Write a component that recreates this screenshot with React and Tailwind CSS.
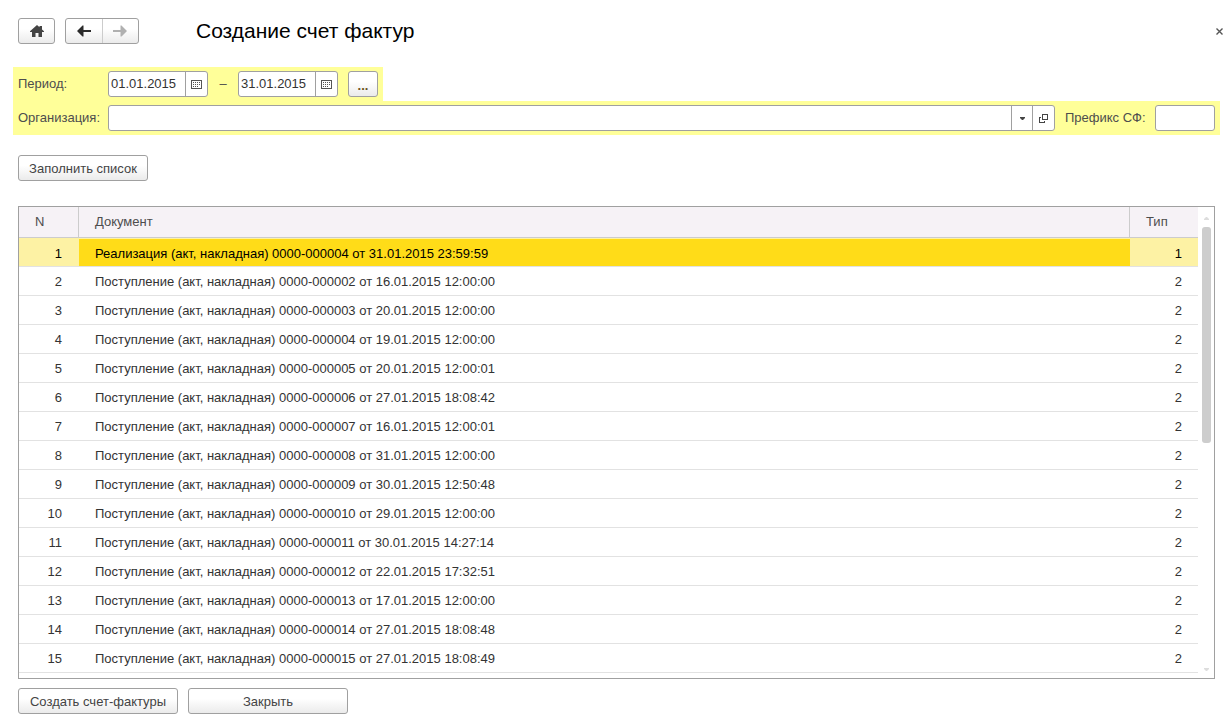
import { useState } from 'react';

const DOCUMENTS = [
  { title: 'Реализация (акт, накладная) 0000-000004 от 31.01.2015 23:59:59', type: 1 },
  { title: 'Поступление (акт, накладная) 0000-000002 от 16.01.2015 12:00:00', type: 2 },
  { title: 'Поступление (акт, накладная) 0000-000003 от 20.01.2015 12:00:00', type: 2 },
  { title: 'Поступление (акт, накладная) 0000-000004 от 19.01.2015 12:00:00', type: 2 },
  { title: 'Поступление (акт, накладная) 0000-000005 от 20.01.2015 12:00:01', type: 2 },
  { title: 'Поступление (акт, накладная) 0000-000006 от 27.01.2015 18:08:42', type: 2 },
  { title: 'Поступление (акт, накладная) 0000-000007 от 16.01.2015 12:00:01', type: 2 },
  { title: 'Поступление (акт, накладная) 0000-000008 от 31.01.2015 12:00:00', type: 2 },
  { title: 'Поступление (акт, накладная) 0000-000009 от 30.01.2015 12:50:48', type: 2 },
  { title: 'Поступление (акт, накладная) 0000-000010 от 29.01.2015 12:00:00', type: 2 },
  { title: 'Поступление (акт, накладная) 0000-000011 от 30.01.2015 14:27:14', type: 2 },
  { title: 'Поступление (акт, накладная) 0000-000012 от 22.01.2015 17:32:51', type: 2 },
  { title: 'Поступление (акт, накладная) 0000-000013 от 17.01.2015 12:00:00', type: 2 },
  { title: 'Поступление (акт, накладная) 0000-000014 от 27.01.2015 18:08:48', type: 2 },
  { title: 'Поступление (акт, накладная) 0000-000015 от 27.01.2015 18:08:49', type: 2 },
];

function HomeIcon() {
  return (
    <svg aria-hidden="true" viewBox="0 0 14 12" fill="currentColor" className="h-3 w-3.5">
      <path d="M7 0 L9.5 2.3 V1 H12 V4.5 L14 6.3 V7 H12 V12 H8.5 V8 H5.5 V12 H2 V7 H0 V6.3 Z" />
    </svg>
  );
}

function ArrowIcon({ className = '' }) {
  return (
    <svg aria-hidden="true" viewBox="0 0 14 12" fill="currentColor" className={`h-3 w-3.5 ${className}`}>
      <path d="M0 6 L5.5 0.5 H6.5 V5 H14 V7 H6.5 V11.5 H5.5 Z" />
    </svg>
  );
}

function CalendarIcon() {
  return (
    <svg aria-hidden="true" viewBox="0 0 11 9" className="h-[9px] w-[11px]" shapeRendering="crispEdges">
      <path d="M0 0H11V9H0Z M1 1V8H10V1Z" fill="#555555" fillRule="evenodd" />
      <path d="M2 2.5H9 M2 4.5H9 M2 6.5H7" stroke="#555555" strokeDasharray="1 1" />
    </svg>
  );
}

function OpenIcon() {
  return (
    <svg
      aria-hidden="true"
      viewBox="0 0 9 9"
      fill="none"
      stroke="#444444"
      className="h-[9px] w-[9px]"
      shapeRendering="crispEdges"
    >
      <path d="M3.5 0.5H8.5V5.5H3.5Z M2 3.5H0.5V8.5H5.5V7" />
    </svg>
  );
}

function TriangleIcon({ className = '' }) {
  return (
    <svg aria-hidden="true" viewBox="0 0 5 3" fill="currentColor" className={`h-[3px] w-[5px] ${className}`}>
      <path d="M0 0H5V1L3 3H2L0 1Z" />
    </svg>
  );
}

function Button({ className = '', children, ...props }) {
  return (
    <button
      type="button"
      className={`flex items-center justify-center rounded-[3px] border border-[#a0a0a0] bg-linear-to-b from-white from-40% to-[#ebebeb] text-[#444444] ${className}`}
      {...props}
    >
      {children}
    </button>
  );
}

function DateField({ label, value, onChange }) {
  return (
    <div className="flex h-[26px] w-[100px] overflow-hidden rounded-[3px] border border-[#a0a0a0] bg-white">
      <input
        type="text"
        aria-label={label}
        value={value}
        onChange={(e) => onChange(e.target.value)}
        className="min-w-0 flex-1 pl-0.5 text-[#333333] outline-none"
      />
      <button
        type="button"
        aria-label={`${label}: выбрать дату`}
        className="flex w-[22px] items-center justify-center border-l border-[#a0a0a0]"
      >
        <CalendarIcon />
      </button>
    </div>
  );
}

function DocumentTable({ selected, onSelect }) {
  return (
    <div className="flex border border-[#a0a0a0] pb-[5px]">
      <table className="flex-1 table-fixed border-separate border-spacing-0">
        <colgroup>
          <col className="w-[60px]" />
          <col />
          <col className="w-[68px]" />
        </colgroup>
        <thead>
          <tr className="h-[31px] bg-[#f6f2f6] text-left text-[#4d4d4d]">
            <th className="border-r border-b border-[#cccccc] pl-4 font-normal">N</th>
            <th className="border-r border-b border-[#cccccc] pl-4 font-normal">Документ</th>
            <th className="border-b border-[#cccccc] pl-4 font-normal">Тип</th>
          </tr>
        </thead>
        <tbody>
          {DOCUMENTS.map((doc, index) => {
            const active = index === selected;
            const line = active ? 'border-t border-t-[#fdf2a4]' : '';
            const side = active ? 'bg-[#fdf2a4]' : '';
            return (
              <tr
                key={doc.title}
                onClick={() => onSelect(index)}
                className={`h-[29px] ${active ? 'text-black' : 'text-[#333333]'}`}
              >
                <td className={`border-b border-b-[#e2e2e2] pt-0.5 pr-[17px] text-right ${line} ${side}`}>
                  {index + 1}
                </td>
                <td className={`border-b border-b-[#e2e2e2] pt-0.5 pl-4 ${line} ${active ? 'bg-[#ffdc18]' : ''}`}>
                  {doc.title}
                </td>
                <td className={`border-b border-b-[#e2e2e2] pt-0.5 pr-4 text-right ${line} ${side}`}>
                  {doc.type}
                </td>
              </tr>
            );
          })}
        </tbody>
      </table>

      <div className="flex w-4 flex-col items-center text-[#dddddd]" aria-hidden="true">
        <TriangleIcon className="mt-2.5 mb-[7px] shrink-0 rotate-180" />
        <div className="min-h-0 w-[9px] flex-1">
          <div className="h-[49%] rounded-[3px] bg-[#cdcdcd]" />
        </div>
        <TriangleIcon className="mb-0.5 shrink-0" />
      </div>
    </div>
  );
}

export default function App() {
  const [dateFrom, setDateFrom] = useState('01.01.2015');
  const [dateTo, setDateTo] = useState('31.01.2015');
  const [organization, setOrganization] = useState('');
  const [prefix, setPrefix] = useState('');
  const [selected, setSelected] = useState(0);

  return (
    <main className="bg-white pt-[18px] pb-3 font-['Liberation_Sans',Arial,sans-serif] text-[13px] leading-4">
      <header className="flex items-center pr-[1px] pl-[18px]">
        <Button aria-label="Домой" className="h-[26px] w-[37px] text-[#2b2b2b]">
          <HomeIcon />
        </Button>
        <div className="ml-2.5 flex h-[26px] w-[74px] overflow-hidden rounded-[3px] border border-[#a0a0a0] bg-linear-to-b from-white from-40% to-[#ebebeb]">
          <button
            type="button"
            aria-label="Назад"
            className="flex flex-1 items-center justify-center border-r border-[#cccccc] text-[#2b2b2b]"
          >
            <ArrowIcon />
          </button>
          <button type="button" aria-label="Вперед" className="flex flex-1 items-center justify-center text-[#b0b0b0]">
            <ArrowIcon className="rotate-180" />
          </button>
        </div>
        <h1 className="ml-[57px] flex-1 text-[21px] leading-6 text-black">Создание счет фактур</h1>
        <button type="button" aria-label="Закрыть окно" className="p-px text-[#555555]">
          <svg aria-hidden="true" viewBox="0 0 7 7" stroke="currentColor" strokeWidth="1.4" className="h-[7px] w-[7px]">
            <path d="M0.5 0.5L6.5 6.5M6.5 0.5L0.5 6.5" />
          </svg>
        </button>
      </header>

      <form className="mt-[23px] mr-[5px] ml-[13px] text-[#4d4d4d]" onSubmit={(e) => e.preventDefault()}>
        <div className="flex h-[34px] w-fit items-center bg-[#ffff99] px-[5px]">
          <span className="w-[90px]">Период:</span>
          <DateField label="Начало периода" value={dateFrom} onChange={setDateFrom} />
          <span className="w-[30px] text-center">–</span>
          <DateField label="Конец периода" value={dateTo} onChange={setDateTo} />
          <Button aria-label="Выбрать период" className="ml-2.5 h-[26px] w-[30px]">
            <span className="pt-1 font-bold text-[#6b5320]">...</span>
          </Button>
        </div>
        <div className="flex h-[34px] items-center bg-[#ffff99] px-[5px]">
          <label htmlFor="organization" className="w-[90px]">
            Организация:
          </label>
          <div className="flex h-[26px] flex-1 overflow-hidden rounded-[3px] border border-[#a0a0a0] bg-white">
            <input
              id="organization"
              type="text"
              value={organization}
              onChange={(e) => setOrganization(e.target.value)}
              className="min-w-0 flex-1 px-0.5 text-[#333333] outline-none"
            />
            <button
              type="button"
              aria-label="Показать список организаций"
              className="flex w-[21px] items-center justify-center border-l border-[#a0a0a0] text-[#444444]"
            >
              <TriangleIcon />
            </button>
            <button
              type="button"
              aria-label="Открыть организацию"
              className="flex w-[22px] items-center justify-center border-l border-[#a0a0a0]"
            >
              <OpenIcon />
            </button>
          </div>
          <label htmlFor="prefix" className="ml-2.5 w-[90px]">
            Префикс СФ:
          </label>
          <input
            id="prefix"
            type="text"
            value={prefix}
            onChange={(e) => setPrefix(e.target.value)}
            className="h-[26px] w-[60px] rounded-[3px] border border-[#a0a0a0] bg-white px-0.5 text-[#333333] outline-none"
          />
        </div>
      </form>

      <div className="mt-5 mr-2.5 ml-[18px]">
        <Button className="h-[26px] w-[130px] pt-0.5">Заполнить список</Button>

        <section className="mt-[25px]" aria-label="Список документов">
          <DocumentTable selected={selected} onSelect={setSelected} />
        </section>

        <footer className="mt-[9px] flex gap-2.5">
          <Button className="h-[26px] w-40 pt-0.5">Создать счет-фактуры</Button>
          <Button className="h-[26px] w-40 pt-0.5">Закрыть</Button>
        </footer>
      </div>
    </main>
  );
}
